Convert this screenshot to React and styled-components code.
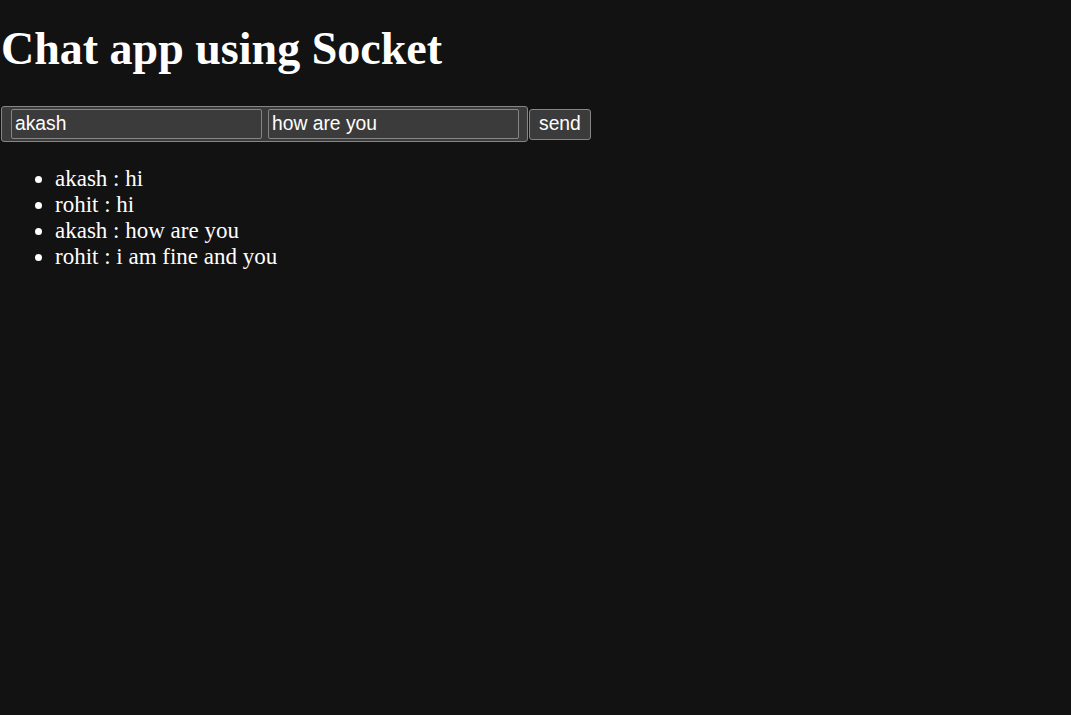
import React from "react";
import styled, { createGlobalStyle } from "styled-components";

const Global = createGlobalStyle`
  html, body { margin: 0; padding: 0; background: #121212; }
  body {
    color: #ffffff;
    font-family: "Liberation Serif", "Times New Roman", serif;
    min-height: 715px;
  }
`;

const Page = styled.div`
  padding: 0 0 0 1px;
`;

const Title = styled.h1`
  font-size: 46px;
  font-weight: bold;
  line-height: 52px;
  margin: 23px 0 31px 0;
`;

const Composer = styled.form`
  display: flex;
  align-items: center;
  margin: 0;
`;

const InputGroup = styled.div`
  display: flex;
  align-items: center;
  gap: 6px;
  background: #3b3b3b;
  border: 1px solid #858585;
  border-radius: 3px;
  padding: 0 8px 0 9px;
  box-sizing: border-box;
  height: 36px;
`;

const Field = styled.input`
  box-sizing: border-box;
  width: 251px;
  height: 30px;
  background: #3b3b3b;
  border: 1px solid #858585;
  border-radius: 2px;
  color: #ffffff;
  font-family: "Liberation Sans", Arial, sans-serif;
  font-size: 19.3px;
  padding: 1px 3px;
  outline: none;
`;

const SendButton = styled.button`
  box-sizing: border-box;
  height: 31px;
  margin-left: 1px;
  padding: 0 9px;
  background: #3b3b3b;
  border: 1px solid #858585;
  border-radius: 3px;
  color: #ffffff;
  font-family: "Liberation Sans", Arial, sans-serif;
  font-size: 19.3px;
`;

const Messages = styled.ul`
  margin: 24px 0 0 0;
  padding-left: 54px;
  font-size: 23px;
  line-height: 26px;
`;

const Message = styled.li``;

const messages = [
  "akash : hi",
  "rohit : hi",
  "akash : how are you",
  "rohit : i am fine and you",
];

export default function App() {
  return (
    <Page>
      <Global />
      <Title>Chat app using Socket</Title>
      <Composer onSubmit={(e) => e.preventDefault()}>
        <InputGroup>
          <Field defaultValue="akash" />
          <Field defaultValue="how are you" />
        </InputGroup>
        <SendButton type="submit">send</SendButton>
      </Composer>
      <Messages>
        {messages.map((m, i) => (
          <Message key={i}>{m}</Message>
        ))}
      </Messages>
    </Page>
  );
}
